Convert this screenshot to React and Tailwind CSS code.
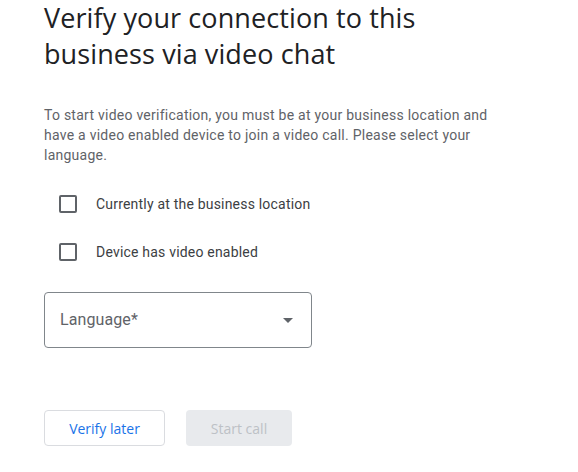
export default function App() {
  const options = ['Currently at the business location', 'Device has video enabled'];

  return (
    <div className="min-h-screen w-[578px] bg-white pl-[44px] font-['Roboto',sans-serif]">
      <h1 className="font-['Open_Sans',sans-serif] text-[27px] leading-[36px] font-normal text-[#202124] tracking-[0.1px]">
        Verify your connection to this
        <br />
        business via video chat
      </h1>

      <p className="mt-[33px] w-[446px] text-[14px] leading-[20px] tracking-[0.25px] text-[#5f6368]">
        To start video verification, you must be at your business location and have a video enabled device to join a
        video call. Please select your language.
      </p>

      <div className="mt-[15px] flex flex-col pl-[4px]">
        {options.map((label) => (
          <label key={label} className="flex h-[48px] items-center">
            <span className="flex h-[40px] w-[40px] items-center justify-center">
              <span className="h-[18px] w-[18px] rounded-[2px] border-2 border-[#5f6368]"></span>
            </span>
            <span className="ml-[8px] text-[14px] tracking-[0.2px] text-[#3c4043]">{label}</span>
          </label>
        ))}
      </div>

      <div className="mt-[16px] flex h-[56px] w-[268px] items-center justify-between rounded-[4px] border border-[#80868b] pl-[15px] pr-[18px]">
        <span className="text-[16px] tracking-[0.1px] text-[#5f6368]">Language*</span>
        <svg width="10" height="5" viewBox="0 0 10 5">
          <path d="M0 0 L5 5 L10 0 Z" fill="#5f6368" />
        </svg>
      </div>

      <div className="mt-[62px] flex gap-[21px]">
        <button className="h-[36px] w-[121px] rounded-[4px] border border-[#dadce0] bg-white font-['Open_Sans',sans-serif] text-[14px] font-medium text-[#1a73e8]">
          Verify later
        </button>
        <button className="h-[36px] w-[106px] rounded-[4px] bg-[#e8eaed] font-['Open_Sans',sans-serif] text-[14px] font-medium text-[#bdc1c6]">
          Start call
        </button>
      </div>
    </div>
  );
}
